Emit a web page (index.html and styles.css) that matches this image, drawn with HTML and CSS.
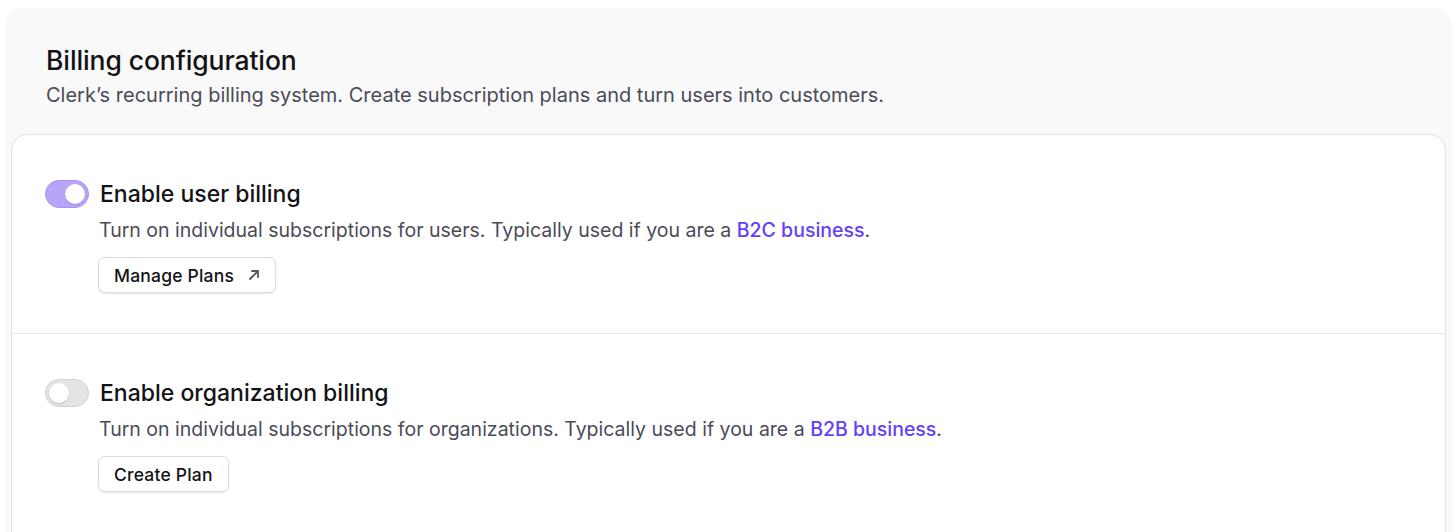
FILE: index.html
```html
<!DOCTYPE html>
<html lang="en">
<head>
<meta charset="UTF-8">
<meta name="viewport" content="width=device-width, initial-scale=1.0">
<title>Billing configuration</title>
<link rel="stylesheet" href="styles.css">
</head>
<body>

<div class="panel">
  <div class="panel-header">
    <h1>Billing configuration</h1>
    <p>Clerk’s recurring billing system. Create subscription plans and turn users into customers.</p>
  </div>

  <div class="card">
    <div class="section">
      <div class="row">
        <span class="toggle on"><span class="knob"></span></span>
        <h2>Enable user billing</h2>
      </div>
      <div class="body">
        <p>Turn on individual subscriptions for users. Typically used if you are a <a href="#">B2C business</a>.</p>
        <button class="btn">Manage Plans
          <svg width="12" height="12" viewBox="0 0 12 12" fill="none" stroke="currentColor" stroke-width="1.8" stroke-linecap="round" stroke-linejoin="round"><path d="M2 10L10 2M4 2h6v6"/></svg>
        </button>
      </div>
    </div>

    <div class="section">
      <div class="row">
        <span class="toggle"><span class="knob"></span></span>
        <h2>Enable organization billing</h2>
      </div>
      <div class="body">
        <p>Turn on individual subscriptions for organizations. Typically used if you are a <a href="#">B2B business</a>.</p>
        <button class="btn">Create Plan</button>
      </div>
    </div>
  </div>
</div>

</body>
</html>
```

FILE: styles.css
```css
body {
  margin: 0;
  background-color: #fff;
  font-family: Inter, "Noto Sans", sans-serif;
  color: #131316;
  height: 532px;
  overflow: hidden;
}
.panel {
  margin: 8px 4px 0 5px;
  padding: 0 6px;
  background-color: #f9f9f9;
  border-radius: 18px 18px 0 0;
  height: 600px;
}
.panel-header {
  padding: 35px 0 26px 35px;
}
.panel-header h1 {
  margin: 0;
  font-size: 26.5px;
  line-height: 34px;
  font-weight: 500;
  letter-spacing: -0.1px;
}
.panel-header p {
  margin: 5px 0 0;
  font-size: 20px;
  line-height: 26px;
  color: #4b4b58;
}
.card {
  background-color: #fff;
  border: 1px solid #e3e3e3;
  border-radius: 16px;
  height: 600px;
}
.section {
  padding: 44px 33px 40px;
}
.section + .section {
  border-top: 1px solid #e8e8e8;
}
.row {
  display: flex;
  align-items: center;
  gap: 11px;
}
.row h2 {
  margin: 0;
  font-size: 23px;
  line-height: 30px;
  font-weight: 500;
}
.toggle {
  width: 44px;
  height: 28px;
  box-sizing: border-box;
  border-radius: 14px;
  background-color: #e4e4e7;
  border: 1px solid #d2d2d6;
  display: flex;
  align-items: center;
  padding: 0 3px;
}
.toggle.on {
  background-color: #b9a4fb;
  border-color: #a990f5;
  justify-content: flex-end;
}
.knob {
  width: 20px;
  height: 20px;
  border-radius: 50%;
  background-color: #fff;
  box-shadow: 0 1px 2px rgba(0, 0, 0, 0.15);
}
.body {
  padding-left: 54px;
}
.body p {
  margin: 8px 0 14px;
  font-size: 19.5px;
  line-height: 26px;
  color: #4b4b58;
}
.body a {
  color: #6340fa;
  font-weight: 500;
  text-decoration: none;
}
.btn {
  display: inline-flex;
  align-items: center;
  gap: 14px;
  height: 36px;
  margin-left: -1px;
  padding: 0 15px;
  font-family: inherit;
  font-size: 17.5px;
  font-weight: 500;
  letter-spacing: 0.2px;
  color: #131316;
  background-color: #fff;
  border: 1px solid #dcdcdf;
  border-radius: 7px;
  box-shadow: 0 1px 2px rgba(0, 0, 0, 0.1);
  cursor: pointer;
}
.btn svg {
  color: #55555f;
}
```
